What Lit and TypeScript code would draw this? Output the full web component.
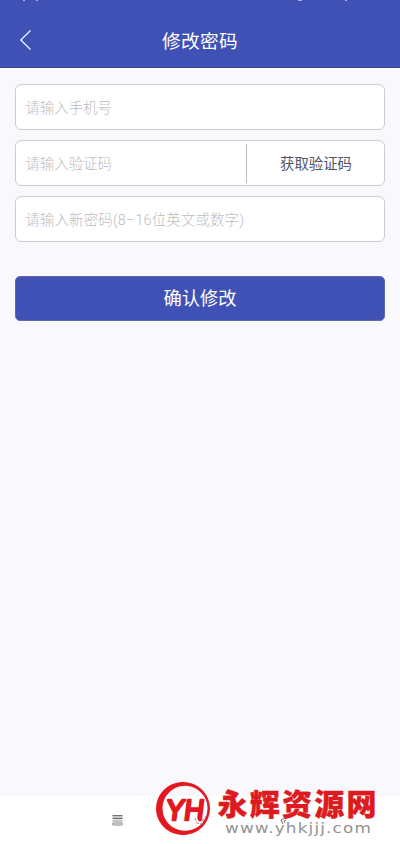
import { LitElement, html, css, svg } from "lit";
import { customElement } from "lit/decorators.js";

@customElement("app-root")
export class AppRoot extends LitElement {
  static styles = css`
    :host {
      display: flex;
      flex-direction: column;
      position: relative;
      height: 844px;
      overflow: hidden;
      background: #f8f8fd;
      font-family: Roboto, "Noto Sans CJK SC", sans-serif;
    }
    * { box-sizing: border-box; }
    .header {
      position: relative;
      height: 68px;
      flex: none;
      display: grid;
      grid-template-columns: 50px 1fr 50px;
      align-items: center;
      padding-top: 14px;
      background: #3f51b5;
      border-bottom: 1px solid #384798;
      color: #fff;
    }
    .status { position: absolute; left: 0; top: 0; }
    .back { display: block; margin-left: 18px; margin-top: -2px; }
    .title {
      text-align: center;
      font-size: 18.7px;
      line-height: 28px;
      letter-spacing: 0.3px;
      font-weight: 400;
      margin: 0;
      padding-top: 2px;
    }
    .form {
      flex: 1;
      padding: 16px 15px 0;
      display: flex;
      flex-direction: column;
      gap: 10px;
    }
    .field {
      display: flex;
      align-items: center;
      height: 46px;
      flex: none;
      border: 1px solid #cbcbd2;
      border-radius: 6px;
      background: #fff;
      padding-left: 9.5px;
      font-size: 14.4px;
      font-weight: 300;
      color: #bcbcbf;
      white-space: nowrap;
    }
    .field + .field { margin-top: 0.2px; }
    .hint { flex: 1; padding-bottom: 2px; }
    .hint.long { letter-spacing: 0.18px; padding-bottom: 1px; }
    .code {
      width: 138px;
      height: 39px;
      padding: 0 0 2px 1px;
      border-left: 1px solid #bdbdc2;
      display: flex;
      align-items: center;
      justify-content: center;
      font-weight: 400;
      color: #515368;
    }
    .submit {
      margin-top: 23.4px;
      height: 45px;
      flex: none;
      border: 1px solid #5f68a5;
      border-radius: 5px;
      background: #3f51b5;
      color: #fff;
      font: inherit;
      font-size: 18.3px;
      line-height: 28px;
      padding: 2px 0 0;
    }
    .nav {
      height: 48px;
      flex: none;
      background: #fff;
    }
    .menu { display: block; margin: 18px 0 0 111px; }
    .mark {
      position: absolute;
      left: 154px;
      top: 780px;
      display: block;
    }
    .yh {
      font: 400 29px "Liberation Sans", sans-serif;
      fill: #e31820;
      stroke: #e31820;
      stroke-width: 2.6;
      stroke-linejoin: round;
    }
    .brand {
      font: 900 30px/1 "Noto Sans CJK SC", sans-serif;
      fill: #dd1a20;
      stroke: #dd1a20;
      stroke-width: 0.4;
    }
    .url {
      font: 14.5px "DejaVu Sans", sans-serif;
      letter-spacing: 1px;
      fill: #929292;
    }
  `;

  private watermark() {
    return svg`
      <path fill="#e31820" fill-rule="evenodd"
        d="M29 2a27 26.5 0 1 0 .01 0zM31 5.8a22.5 22.5 0 1 1 -.01 0z"/>
      <text class="yh" transform="translate(11 39.5) skewX(-7)" x="0" y="0" textLength="38" lengthAdjust="spacingAndGlyphs">YH</text>
      <path fill="none" stroke="#fff" stroke-width="2" d="M41.5 37l2.5 5"/>
      <path fill="none" stroke="#8b8b8b" stroke-width="1" stroke-dasharray="3 1.5"
        d="M41 38l2 5 5 1 2-2M48 41l5-6"/>
      <text class="brand" x="63.5" y="35.2" textLength="159" lengthAdjust="spacing">永辉资源网</text>
      <text class="url" x="71" y="53" textLength="147" lengthAdjust="spacingAndGlyphs">www.yhkjjj.com</text>
      <path fill="none" stroke="#777" stroke-width="1" d="M131 38l-4 2 2 4M132 40l-2 1 1 2"/>
    `;
  }

  render() {
    return html`
      <header class="header">
        <svg class="status" width="400" height="2" viewBox="0 0 400 2">
          <path stroke="#aab3e0" stroke-width="1" d="M23 .5h2M36 .5h2M298 .5h4M345 .5h2"/>
        </svg>
        <svg class="back" width="16" height="24" viewBox="0 0 16 24">
          <path d="M12.5 2.5L2.8 12l9.7 9.5" fill="none" stroke="#f2f4ff" stroke-width="1.3"/>
        </svg>
        <h1 class="title">修改密码</h1>
      </header>
      <main class="form">
        <div class="field"><span class="hint">请输入手机号</span></div>
        <div class="field">
          <span class="hint">请输入验证码</span><span class="code">获取验证码</span>
        </div>
        <div class="field"><span class="hint long">请输入新密码(8–16位英文或数字)</span></div>
        <button class="submit">确认修改</button>
      </main>
      <footer class="nav">
        <svg class="menu" width="13" height="12" viewBox="0 0 13 12">
          <rect x="1.5" y="1" width="10" height="4.5" rx="1" fill="#c4c4c4"/>
          <path d="M1.5 1.5h10M1.5 4.5h10" fill="none" stroke="#747474"/>
          <path d="M1.5 7h10" fill="none" stroke="#8a8a8a"/>
          <rect x="1.5" y="9" width="10" height="2" rx="1" fill="#fff" stroke="#747474" stroke-width=".9"/>
        </svg>
      </footer>
      <svg class="mark" width="230" height="60" viewBox="0 0 230 60">${this.watermark()}</svg>
    `;
  }
}
